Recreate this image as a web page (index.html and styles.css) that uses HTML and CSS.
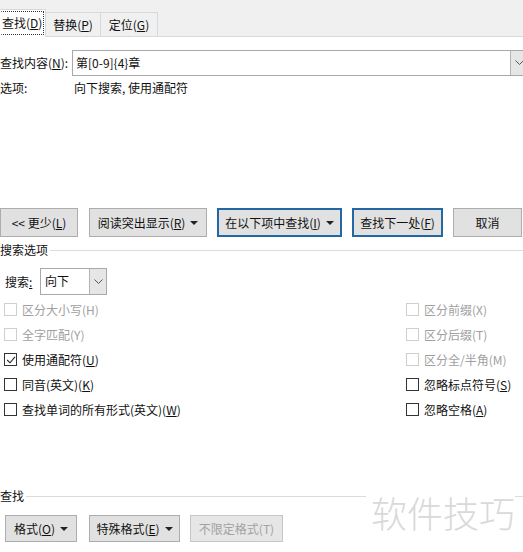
FILE: index.html
```html
<!DOCTYPE html>
<html lang="zh-CN">
<head>
<meta charset="utf-8">
<title>查找和替换</title>
<link rel="stylesheet" href="styles.css">
</head>
<body>
<div class="dialog">
  <div class="tabbar">
    <div class="tab active"><span class="focus">查找(<u>D</u>)</span></div>
    <div class="tab t2">替换(<u>P</u>)</div>
    <div class="tab t3">定位(<u>G</u>)</div>
  </div>

  <div class="find-row">
    <span class="find-label">查找内容(<u>N</u>):</span>
    <div class="combo">
      <div class="combo-text">第[0-9]{4}章</div>
      <div class="combo-btn"><svg width="9" height="6" viewBox="0 0 9 6"><polyline points="0.5,0.5 4.5,4.5 8.5,0.5" fill="none" stroke="#555" stroke-width="1"/></svg></div>
    </div>
  </div>

  <div class="opt-row">
    <span class="opt-label">选项:</span>
    <span class="opt-value">向下搜索, 使用通配符</span>
  </div>

  <div class="btn-row">
    <button class="btn b1">&lt;&lt; 更少(<u>L</u>)</button>
    <button class="btn b2">阅读突出显示(<u>R</u>)<i class="tri"></i></button>
    <button class="btn b3 blue">在以下项中查找(<u>I</u>)<i class="tri"></i></button>
    <button class="btn b4 blue">查找下一处(<u>F</u>)</button>
    <button class="btn b5">取消</button>
  </div>

  <div class="group-head">
    <span class="gh-text">搜索选项</span>
    <i class="rule"></i>
  </div>

  <div class="search-row">
    <span class="search-label">搜索<u>:</u></span>
    <div class="select">
      <div class="select-text">向下</div>
      <div class="select-btn"><svg width="9" height="6" viewBox="0 0 9 6"><polyline points="0.5,0.5 4.5,4.5 8.5,0.5" fill="none" stroke="#555" stroke-width="1"/></svg></div>
    </div>
  </div>

  <div class="checks">
    <div class="col left">
      <div class="chk disabled"><i class="box"></i>区分大小写(H)</div>
      <div class="chk disabled"><i class="box"></i>全字匹配(Y)</div>
      <div class="chk"><i class="box"><svg width="10" height="10" viewBox="0 0 10 10"><polyline points="1.2,5 4,7.8 9,1.8" fill="none" stroke="#222" stroke-width="1.1"/></svg></i>使用通配符(<u>U</u>)</div>
      <div class="chk"><i class="box"></i>同音(英文)(<u>K</u>)</div>
      <div class="chk"><i class="box"></i>查找单词的所有形式(英文)(<u>W</u>)</div>
    </div>
    <div class="col right">
      <div class="chk disabled"><i class="box"></i>区分前缀(X)</div>
      <div class="chk disabled"><i class="box"></i>区分后缀(T)</div>
      <div class="chk disabled"><i class="box"></i>区分全/半角(M)</div>
      <div class="chk"><i class="box"></i>忽略标点符号(<u>S</u>)</div>
      <div class="chk"><i class="box"></i>忽略空格(<u>A</u>)</div>
    </div>
  </div>

  <div class="group-head bottom">
    <span class="gh-text">查找</span>
    <i class="rule"></i>
  </div>

  <div class="btn-row2">
    <button class="btn c1">格式(<u>O</u>)<i class="tri"></i></button>
    <button class="btn c2">特殊格式(<u>E</u>)<i class="tri"></i></button>
    <button class="btn c3 disabled">不限定格式(T)</button>
  </div>

  <div class="watermark">软件技巧</div>
</div>
</body>
</html>
```

FILE: styles.css
```css
html, body {
  margin: 0;
  padding: 0;
  background: #ffffff;
  overflow: hidden;
}

body {
  width: 523px;
  height: 552px;
  font-family: "Noto Sans CJK SC", "Microsoft YaHei", sans-serif;
  font-size: 12px;
  color: #111;
}

u {
  text-decoration: underline;
  text-underline-offset: 1px;
  text-decoration-thickness: 1px;
}

.dialog {
  position: relative;
  width: 523px;
  height: 552px;
}

/* ---------- tabs ---------- */
.tabbar {
  height: 36px;
  background: #f0f0f0;
  border-bottom: 1px solid #dadada;
  display: flex;
  align-items: flex-end;
}

.tab {
  box-sizing: border-box;
  height: 24px;
  border: 1px solid #d9d9d9;
  border-bottom: none;
  display: flex;
  align-items: center;
  justify-content: center;
  line-height: 16px;
  background: #f0f0f0;
  flex-shrink: 0;
}

.tab.active {
  width: 48px;
  height: 28px;
  margin-left: -2px;
  margin-bottom: -1px;
  background: #ffffff;
  align-items: flex-start;
  justify-content: flex-start;
  padding-left: 2px;
}

.tab.t2 {
  width: 55px;
  border-left: none;
}

.tab.t3 {
  width: 57px;
  border-left: none;
}

.focus {
  display: block;
  margin-top: 1px;
  height: 22px;
  line-height: 22px;
  padding: 0 1px 0 0;
  border: 1px dotted #333;
  border-left-color: transparent;
}

/* ---------- find row ---------- */
.find-row {
  display: flex;
  align-items: center;
  margin-top: 13px;
  height: 26px;
}

.find-label {
  flex: 0 0 72px;
  line-height: 16px;
}

.combo {
  box-sizing: border-box;
  flex: 0 0 456px;
  height: 26px;
  border: 1px solid #a9a9a9;
  display: flex;
}

.combo-text {
  flex: 1;
  padding-left: 3px;
  line-height: 23px;
}

.combo-btn {
  width: 16px;
  background: #e6e6e6;
  border-left: 1px solid #b4b4b4;
  display: flex;
  align-items: center;
  justify-content: center;
}

/* ---------- options ---------- */
.opt-row {
  display: flex;
  margin-top: 4px;
  line-height: 16px;
}

.opt-label {
  flex: 0 0 74px;
}

/* ---------- buttons ---------- */
.btn {
  box-sizing: border-box;
  font: inherit;
  color: #111;
  background: #e1e1e1;
  border: 1px solid #adadad;
  padding: 0;
  display: inline-flex;
  align-items: center;
  justify-content: center;
  line-height: 16px;
  flex-shrink: 0;
}

.btn.blue {
  border: 2px solid #2367a3;
}

.btn.disabled {
  color: #a2a2a2;
  background: #e6e6e6;
  border-color: #c6c6c6;
}

.tri {
  display: inline-block;
  width: 0;
  height: 0;
  border-left: 4px solid transparent;
  border-right: 4px solid transparent;
  border-top: 4px solid #222;
  margin-left: 5px;
  margin-top: 1px;
}

.btn-row {
  display: flex;
  margin-top: 112px;
  height: 29px;
}

.btn-row .btn { height: 29px; }
.b1 { width: 78px; }
.b2 { width: 118px; margin-left: 11px; }
.b3 { width: 125px; margin-left: 10px; }
.b4 { width: 91px; margin-left: 10px; }
.b5 { width: 69px; margin-left: 10px; }

/* ---------- group heads ---------- */
.group-head {
  display: flex;
  align-items: center;
  margin-top: 5px;
  height: 16px;
  line-height: 16px;
}

.gh-text {
  padding-right: 2px;
}

.rule {
  flex: 1;
  height: 1px;
  background: #dcdcdc;
}

.group-head.bottom {
  margin-top: 66px;
}

/* ---------- search direction ---------- */
.search-row {
  display: flex;
  align-items: center;
  margin-top: 10px;
  height: 27px;
}

.search-label {
  margin-left: 5px;
  width: 35px;
  line-height: 16px;
}

.select {
  box-sizing: border-box;
  width: 67px;
  height: 27px;
  border: 1px solid #a9a9a9;
  display: flex;
}

.select-text {
  flex: 1;
  padding-left: 4px;
  line-height: 24px;
}

.select-btn {
  width: 16px;
  background: #e6e6e6;
  border-left: 1px solid #b4b4b4;
  display: flex;
  align-items: center;
  justify-content: center;
}

/* ---------- checkboxes ---------- */
.checks {
  display: flex;
  margin-top: 2px;
}

.col.left {
  width: 402px;
  padding-left: 4px;
}

.chk {
  height: 25px;
  display: flex;
  align-items: center;
  line-height: 16px;
}

.chk .box {
  box-sizing: border-box;
  width: 13px;
  height: 13px;
  border: 1px solid #333;
  background: #fff;
  margin-right: 5px;
  display: flex;
  align-items: center;
  justify-content: center;
}

.chk.disabled {
  color: #a0a0a0;
}

.chk.disabled .box {
  border-color: #cfcfcf;
}

/* ---------- bottom buttons ---------- */
.btn-row2 {
  display: flex;
  margin-top: 11px;
  padding-left: 5px;
}

.btn-row2 .btn { height: 27px; }
.c1 { width: 72px; }
.c2 { width: 91px; margin-left: 12px; }
.c3 { width: 93px; margin-left: 10px; }

/* ---------- watermark overlay ---------- */
.watermark {
  position: absolute;
  left: 366px;
  top: 492px;
  padding-left: 5px;
  background: #ffffff;
  font-size: 36px;
  line-height: 40px;
  font-weight: 300;
  color: #d9d9d9;
}
```
